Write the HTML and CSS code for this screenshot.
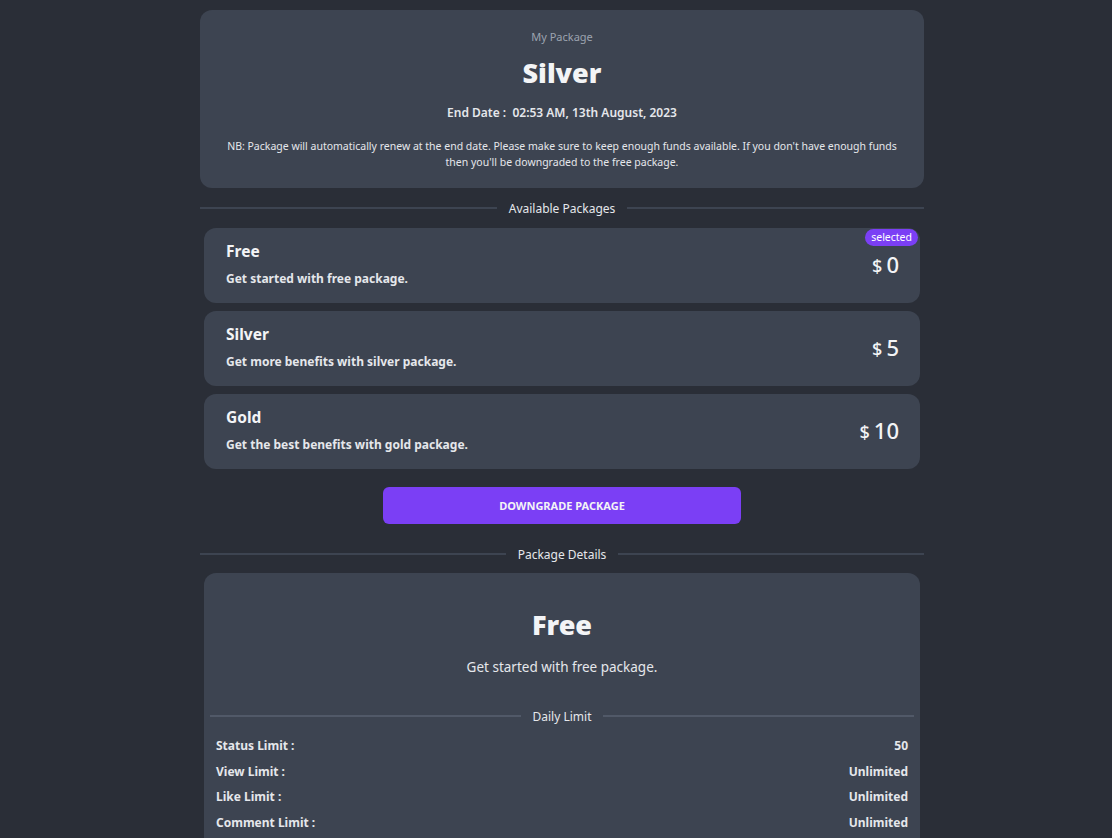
FILE: index.html
```html
<!DOCTYPE html>
<html lang="en">
<head>
<meta charset="utf-8">
<title>My Package</title>
<link rel="stylesheet" href="styles.css">
</head>
<body>
<main class="wrap">
  <section class="current">
    <div class="current-label">My Package</div>
    <h1 class="current-name">Silver</h1>
    <div class="end-date">End Date :&nbsp; 02:53 AM, 13th August, 2023</div>
    <p class="note">NB: Package will automatically renew at the end date. Please make sure to keep enough funds available. If you don't have enough funds then you'll be downgraded to the free package.</p>
  </section>

  <div class="divider"><span>Available Packages</span></div>

  <div class="packages">
    <div class="pkg">
      <div class="pkg-info">
        <div class="pkg-title">Free</div>
        <div class="pkg-desc">Get started with free package.</div>
      </div>
      <div class="pkg-price"><span class="cur">$</span>0</div>
      <span class="badge">selected</span>
    </div>
    <div class="pkg">
      <div class="pkg-info">
        <div class="pkg-title">Silver</div>
        <div class="pkg-desc">Get more benefits with silver package.</div>
      </div>
      <div class="pkg-price"><span class="cur">$</span>5</div>
    </div>
    <div class="pkg">
      <div class="pkg-info">
        <div class="pkg-title">Gold</div>
        <div class="pkg-desc">Get the best benefits with gold package.</div>
      </div>
      <div class="pkg-price"><span class="cur">$</span>10</div>
    </div>
  </div>

  <div class="btn-row"><button class="btn">DOWNGRADE PACKAGE</button></div>

  <div class="divider details-divider"><span>Package Details</span></div>

  <section class="details">
    <h2 class="details-name">Free</h2>
    <p class="details-desc">Get started with free package.</p>
    <div class="divider inner"><span>Daily Limit</span></div>
    <div class="limits">
      <div class="limit"><span>Status Limit :</span><span>50</span></div>
      <div class="limit"><span>View Limit :</span><span>Unlimited</span></div>
      <div class="limit"><span>Like Limit :</span><span>Unlimited</span></div>
      <div class="limit"><span>Comment Limit :</span><span>Unlimited</span></div>
    </div>
  </section>
</main>
</body>
</html>
```

FILE: styles.css
```css
* { box-sizing: border-box; }
html, body { margin: 0; padding: 0; }
body {
  background: #2a2e37;
  color: #e5e7eb;
  font-family: "Noto Sans", "Open Sans", sans-serif;
  height: 838px;
  overflow: hidden;
  padding-left: 12px;
}
.wrap {
  width: 724px;
  margin: 0 auto;
  padding-top: 10px;
}
.current {
  background: #3d4451;
  border-radius: 12px;
  text-align: center;
  padding: 20px 26px 18px;
  height: 178px;
}
.current-label {
  font-size: 11px;
  color: #9ca3af;
  line-height: 14px;
}
.current-name {
  margin: 11px 0 0;
  font-size: 27px;
  font-weight: 900;
  line-height: 36px;
  color: #f3f4f6;
}
.end-date {
  margin-top: 13px;
  font-size: 12px;
  font-weight: 600;
  line-height: 18px;
}
.note {
  margin: 16px 0 0;
  font-size: 10.5px;
  line-height: 16px;
}
.divider {
  display: flex;
  align-items: center;
  gap: 12px;
  font-size: 12px;
  color: #e5e7eb;
  height: 40px;
}
.divider::before, .divider::after {
  content: "";
  flex: 1;
  height: 2px;
  background: #3d4451;
}
.divider.inner::before, .divider.inner::after { background: #515968; }
.packages {
  display: flex;
  flex-direction: column;
  gap: 8px;
  padding: 0 4px;
}
.pkg {
  position: relative;
  background: #3d4451;
  border-radius: 12px;
  height: 75px;
  display: flex;
  align-items: center;
  justify-content: space-between;
  padding: 0 21px 3px 22px;
}
.pkg-title {
  font-size: 15.5px;
  font-weight: 700;
  line-height: 20px;
  color: #f3f4f6;
}
.pkg-desc {
  margin-top: 10px;
  font-size: 12px;
  font-weight: 700;
  line-height: 16px;
}
.pkg-price {
  margin-top: 2px;
  font-size: 22px;
  font-weight: 500;
  color: #f3f4f6;
  line-height: 26px;
}
.pkg-price .cur {
  font-size: 18px;
  margin-right: 4px;
}
.badge {
  position: absolute;
  top: 1px;
  right: 2px;
  background: #7b3ff5;
  color: #fff;
  font-size: 10.5px;
  line-height: 17px;
  padding: 0 6px;
  border-radius: 9px;
}
.btn-row {
  display: flex;
  justify-content: center;
  padding-top: 18px;
}
.btn {
  width: 358px;
  height: 37px;
  border: 0;
  border-radius: 6px;
  background: #7b3ff5;
  color: #f3f4f6;
  font-family: inherit;
  font-size: 11px;
  font-weight: 700;
}
.details-divider {
  margin-top: 11px;
  height: 38px;
}
.details {
  background: #3d4451;
  border-radius: 12px 12px 0 0;
  margin: 0 4px;
  padding: 32px 6px 20px;
  text-align: center;
}
.details-name {
  margin: 0;
  font-size: 27px;
  font-weight: 900;
  line-height: 40px;
  color: #f3f4f6;
}
.details-desc {
  margin: 12px 0 0;
  font-size: 13.5px;
  line-height: 20px;
}
.details .divider { margin-top: 22px; height: 34px; }
.limits {
  display: flex;
  flex-direction: column;
  padding: 0 6px;
}
.limit {
  display: flex;
  justify-content: space-between;
  font-size: 12px;
  font-weight: 700;
  line-height: 25.6px;
}
```
